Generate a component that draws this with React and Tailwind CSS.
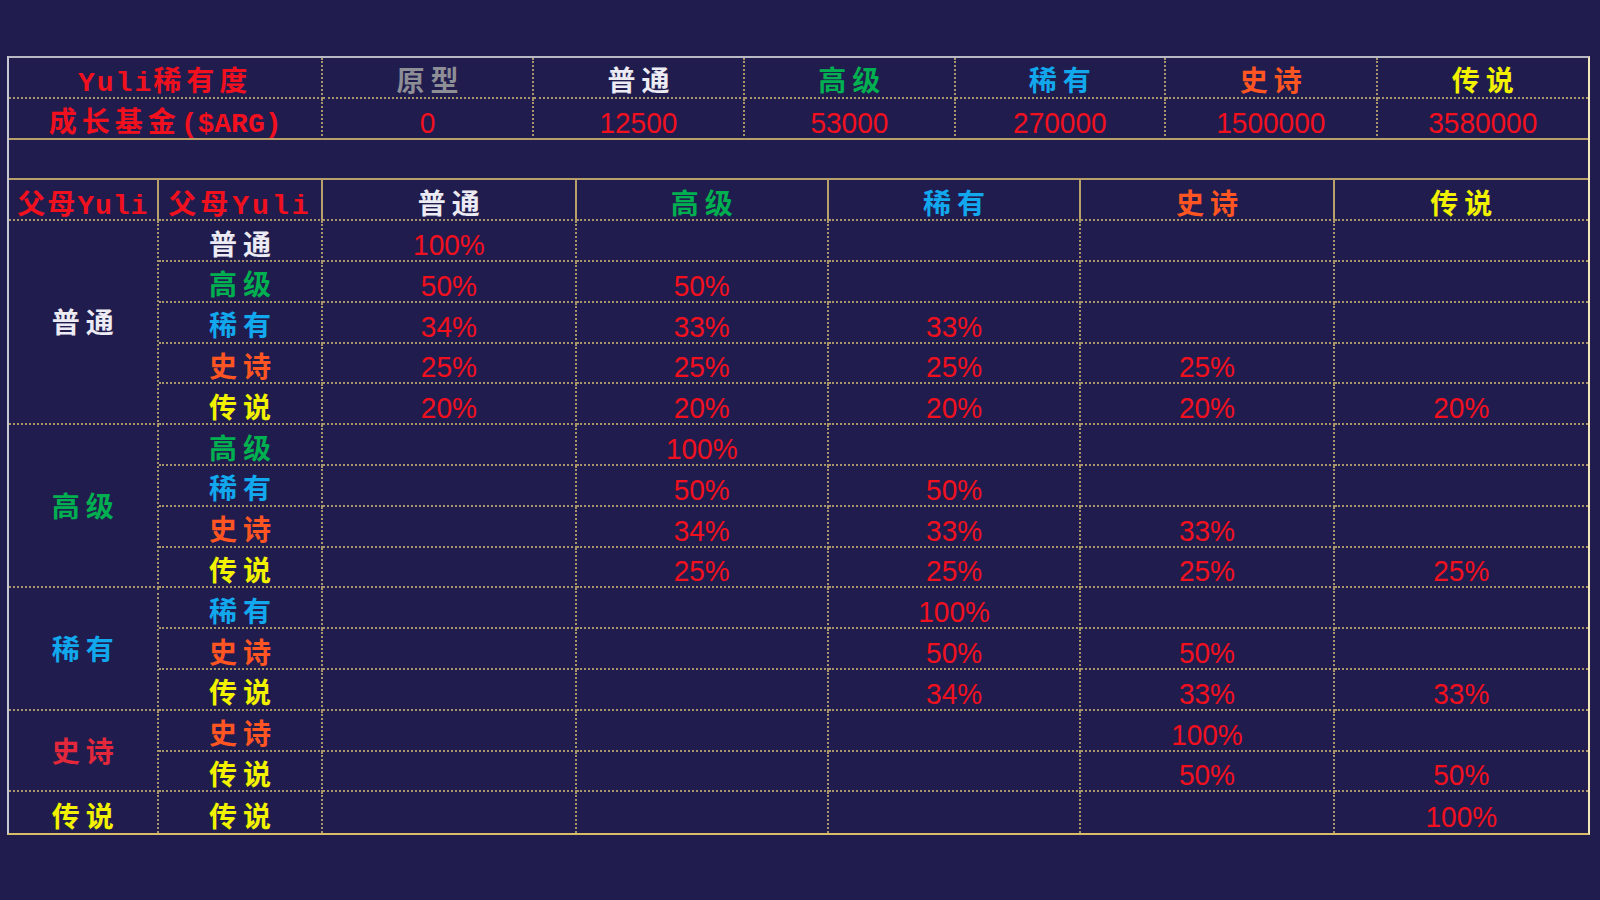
import React from 'react';

const CJK = "[font-family:'Liberation_Mono','Noto_Sans_CJK_SC',monospace] font-semibold text-[28px] leading-none";
const NUM = "[font-family:'Liberation_Sans',Arial,sans-serif] text-[28px] leading-none text-[#f0101e] inline-block scale-y-[1.08]";

const COLORS = {
  '普通': 'text-[#ecebf3]',
  '高级': 'text-[#00b050]',
  '稀有': 'text-[#12a8ee]',
  '史诗': 'text-[#ff5522]',
  '传说': 'text-[#f2f200]',
};

const SPANS = {
  5: 'row-span-5',
  4: 'row-span-4',
  3: 'row-span-3',
  2: 'row-span-2',
  1: 'row-span-1',
};

const CELL = 'flex items-center justify-center pt-[14px] border-[#a8966a]';
const NCELL = 'flex items-center justify-center pt-[9px] border-[#a8966a]';
const GCELL = 'flex items-center justify-center pt-[8px] border-[#a8966a]';

function Label({ k, color }) {
  return (
    <span className={CJK + ' tracking-[6px] pl-[6px] ' + (color || COLORS[k])}>{k}</span>
  );
}

const groups = [
  {
    g: '普通',
    rows: [
      ['普通', ['100%', '', '', '', '']],
      ['高级', ['50%', '50%', '', '', '']],
      ['稀有', ['34%', '33%', '33%', '', '']],
      ['史诗', ['25%', '25%', '25%', '25%', '']],
      ['传说', ['20%', '20%', '20%', '20%', '20%']],
    ],
  },
  {
    g: '高级',
    rows: [
      ['高级', ['', '100%', '', '', '']],
      ['稀有', ['', '50%', '50%', '', '']],
      ['史诗', ['', '34%', '33%', '33%', '']],
      ['传说', ['', '25%', '25%', '25%', '25%']],
    ],
  },
  {
    g: '稀有',
    rows: [
      ['稀有', ['', '', '100%', '', '']],
      ['史诗', ['', '', '50%', '50%', '']],
      ['传说', ['', '', '34%', '33%', '33%']],
    ],
  },
  {
    g: '史诗',
    color: 'text-[#e2283a]',
    rows: [
      ['史诗', ['', '', '', '100%', '']],
      ['传说', ['', '', '', '50%', '50%']],
    ],
  },
  {
    g: '传说',
    rows: [['传说', ['', '', '', '', '100%']]],
  },
];

const topCols = ['原型', '普通', '高级', '稀有', '史诗', '传说'];
const topVals = ['0', '12500', '53000', '270000', '1500000', '3580000'];

export default function App() {
  const cells = [];
  let rowIndex = 0;
  const totalRows = 15;
  groups.forEach((grp, gi) => {
    const lastGroup = gi === groups.length - 1;
    grp.rows.forEach((r, ri) => {
      rowIndex += 1;
      const lastRow = rowIndex === totalRows;
      if (ri === 0) {
        cells.push(
          <div
            key={'g' + gi}
            className={
              (grp.rows.length === 1 ? CELL : GCELL) +
              ' ' +
              SPANS[grp.rows.length] +
              ' border-r-2 border-dotted ' +
              (lastGroup ? '' : 'border-b-2')
            }
          >
            <Label k={grp.g} color={grp.color} />
          </div>
        );
      }
      cells.push(
        <div
          key={'l' + rowIndex}
          className={CELL + ' border-r-2 border-dotted ' + (lastRow ? '' : 'border-b-2')}
        >
          <Label k={r[0]} />
        </div>
      );
      r[1].forEach((v, ci) => {
        cells.push(
          <div
            key={'v' + rowIndex + '-' + ci}
            className={
              NCELL +
              ' border-dotted ' +
              (ci === 4 ? '' : 'border-r-2 ') +
              (lastRow ? '' : 'border-b-2')
            }
          >
            <span className={NUM}>{v}</span>
          </div>
        );
      });
    });
  });

  return (
    <div className="w-[1600px] h-[900px] bg-[#201d4e] pt-[56px] pl-[7px] overflow-hidden">
      <div className="w-[1583px] border-t-2 border-l-2 border-r-2 border-b-2 border-t-[#b8b8c2] border-l-[#c8c8d2] border-r-[#f2e6ba] border-b-[#d8bc68] flex flex-col">
        {/* Top table */}
        <div className="grid grid-cols-[315fr_211fr_212fr_211fr_211fr_212fr_211fr] auto-rows-[40.8px]">
          <div className={CELL + ' border-r-2 border-b-2 border-dotted'}>
            <span className={CJK + ' text-[#f0101e]'}>
              <span className="tracking-[2px]">Yuli</span>
              <span className="tracking-[5px]">稀有度</span>
            </span>
          </div>
          {topCols.map((k, i) => (
            <div
              key={'th' + i}
              className={CELL + ' border-b-2 border-dotted ' + (i === 5 ? '' : 'border-r-2')}
            >
              <Label k={k} color={i === 0 ? 'text-[#8e8e96]' : undefined} />
            </div>
          ))}
          <div className={CELL + ' border-r-2 border-b-2 border-dotted [border-bottom-style:solid] border-b-[#b8a06a]'}>
            <span className={CJK + ' text-[#f0101e]'}>
              <span className="tracking-[5px]">成长基金</span>
              <span>($ARG)</span>
            </span>
          </div>
          {topVals.map((v, i) => (
            <div
              key={'tv' + i}
              className={
                NCELL +
                ' border-b-2 border-dotted [border-bottom-style:solid] border-b-[#b8a06a] ' +
                (i === 5 ? '' : 'border-r-2')
              }
            >
              <span className={NUM}>{v}</span>
            </div>
          ))}
        </div>

        {/* Empty row */}
        <div className="h-[40.8px] border-b-2 border-[#b8a06a]"></div>

        {/* Bottom table */}
        <div className="grid grid-cols-[150fr_165fr_254fr_253fr_253fr_254fr_254fr] auto-rows-[40.8px]">
          <div className={CELL + ' border-r-2 border-b-2 border-dotted [border-right-style:solid] border-r-[#b8a06a]'}>
            <span className={CJK + ' text-[#f0101e]'}>
              <span className="tracking-[2px]">父母</span>
              <span className="tracking-[1px]">Yuli</span>
            </span>
          </div>
          <div className={CELL + ' border-r-2 border-b-2 border-dotted [border-right-style:solid] border-r-[#b8a06a]'}>
            <span className={CJK + ' text-[#f0101e]'}>
              <span className="tracking-[4px]">父母</span>
              <span className="tracking-[3px]">Yuli</span>
            </span>
          </div>
          {['普通', '高级', '稀有', '史诗', '传说'].map((k, i) => (
            <div
              key={'bh' + i}
              className={
                CELL +
                ' border-b-2 border-dotted ' +
                (i === 4 ? '' : 'border-r-2 [border-right-style:solid] border-r-[#b8a06a]')
              }
            >
              <Label k={k} />
            </div>
          ))}
          {cells}
        </div>
      </div>
    </div>
  );
}
